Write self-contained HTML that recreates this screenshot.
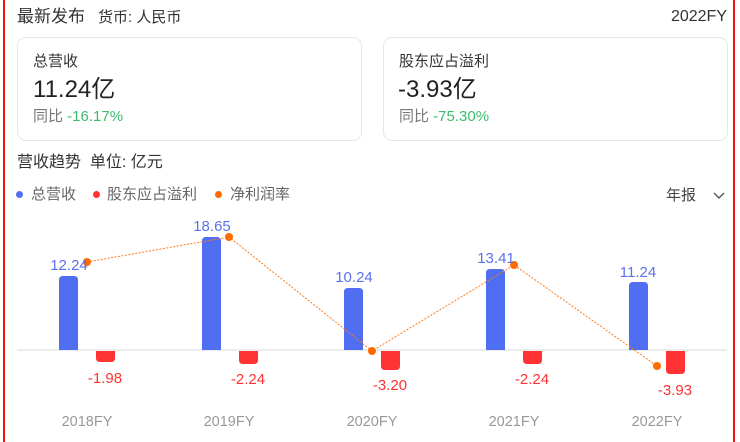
<!DOCTYPE html>
<html><head><meta charset="utf-8"><style>
*{margin:0;padding:0;box-sizing:border-box}
body{width:740px;height:442px;background:#fff;position:relative;overflow:hidden;font-family:"Liberation Sans","Noto Sans CJK SC",sans-serif;color:#333}
.a{position:absolute;white-space:nowrap;line-height:1}
.card{position:absolute;top:37px;width:345px;height:104px;border:1px solid #e6e6e6;border-radius:9px}
.lbl{font-size:15px;color:#333}
.val{font-size:24px;color:#222}
.yoy{font-size:15px;color:#777}
.g{color:#3dbb6c}
.dot{position:absolute;width:7px;height:7px;border-radius:50%;top:191px}
</style></head><body>
<div style="position:absolute;left:3px;top:0;width:2px;height:442px;background:#f01010"></div>
<div style="position:absolute;left:733px;top:0;width:2px;height:442px;background:#f01010"></div>

<div class="a" style="left:17px;top:8px;font-size:17px;color:#333">最新发布</div>
<div class="a" style="left:98px;top:10px;font-size:15px;color:#333">货币: 人民币</div>
<div class="a" style="right:13px;top:9px;font-size:16px;color:#333">2022FY</div>

<div class="card" style="left:17px"></div>
<div class="a lbl" style="left:33px;top:54px">总营收</div>
<div class="a val" style="left:33px;top:78px">11.24亿</div>
<div class="a yoy" style="left:33px;top:109px">同比 <span class="g">-16.17%</span></div>

<div class="card" style="left:383px"></div>
<div class="a lbl" style="left:399px;top:54px">股东应占溢利</div>
<div class="a val" style="left:398px;top:78px">-3.93亿</div>
<div class="a yoy" style="left:399px;top:109px">同比 <span class="g">-75.30%</span></div>

<div class="a" style="left:17px;top:155px;font-size:16px;color:#333">营收趋势&nbsp; 单位: 亿元</div>

<div class="dot" style="left:16px;background:#4f6ef2"></div>
<div class="a" style="left:31px;top:187px;font-size:15px;color:#666">总营收</div>
<div class="dot" style="left:93px;background:#ff3333"></div>
<div class="a" style="left:107px;top:187px;font-size:15px;color:#666">股东应占溢利</div>
<div class="dot" style="left:215px;background:#ff6a00"></div>
<div class="a" style="left:230px;top:187px;font-size:15px;color:#666">净利润率</div>
<div class="a" style="left:666px;top:188px;font-size:15px;color:#444">年报</div>
<svg style="position:absolute;left:712px;top:191px" width="14" height="10"><path d="M2 2 L7 7 L12 2" fill="none" stroke="#555" stroke-width="1.4"/></svg>

<svg style="position:absolute;left:0;top:0" width="740" height="442">
<line x1="17" y1="350" x2="727" y2="350" stroke="#e6e6e6" stroke-width="1.5"/>
<g fill="#4f6ef2">
<path d="M59 350V280q0-4 4-4h11q4 0 4 4V350z"/>
<path d="M202 350V241q0-4 4-4h11q4 0 4 4V350z"/>
<path d="M344 350V292q0-4 4-4h11q4 0 4 4V350z"/>
<path d="M486 350V273q0-4 4-4h11q4 0 4 4V350z"/>
<path d="M629 350V286q0-4 4-4h11q4 0 4 4V350z"/>
</g>
<g fill="#ff3333">
<path d="M96 351V358q0 4 4 4h11q4 0 4-4V351z"/>
<path d="M239 351V360q0 4 4 4h11q4 0 4-4V351z"/>
<path d="M381 351V366q0 4 4 4h11q4 0 4-4V351z"/>
<path d="M523 351V360q0 4 4 4h11q4 0 4-4V351z"/>
<path d="M666 351V370q0 4 4 4h11q4 0 4-4V351z"/>
</g>
<polyline points="87,262 229,237 372,351 514,265 657,366" fill="none" stroke="#ff7a1a" stroke-width="1" stroke-dasharray="2,1.5"/>
<g fill="#ff6a00">
<circle cx="87" cy="262" r="4"/><circle cx="229" cy="237" r="4"/><circle cx="372" cy="351" r="4"/><circle cx="514" cy="265" r="4"/><circle cx="657" cy="366" r="4"/>
</g>
<g font-family="Liberation Sans,sans-serif" font-size="15" fill="#5a72ee" text-anchor="middle">
<text x="69" y="270">12.24</text><text x="212" y="231">18.65</text><text x="354" y="282">10.24</text><text x="496" y="263">13.41</text><text x="638" y="277">11.24</text>
</g>
<g font-family="Liberation Sans,sans-serif" font-size="15" fill="#ff3333" text-anchor="middle">
<text x="105" y="383">-1.98</text><text x="248" y="384">-2.24</text><text x="390" y="390">-3.20</text><text x="532" y="384">-2.24</text><text x="675" y="395">-3.93</text>
</g>
<g font-family="Liberation Sans,sans-serif" font-size="14.5" fill="#999" text-anchor="middle">
<text x="87" y="426">2018FY</text><text x="229" y="426">2019FY</text><text x="372" y="426">2020FY</text><text x="514" y="426">2021FY</text><text x="657" y="426">2022FY</text>
</g>
</svg>
</body></html>
